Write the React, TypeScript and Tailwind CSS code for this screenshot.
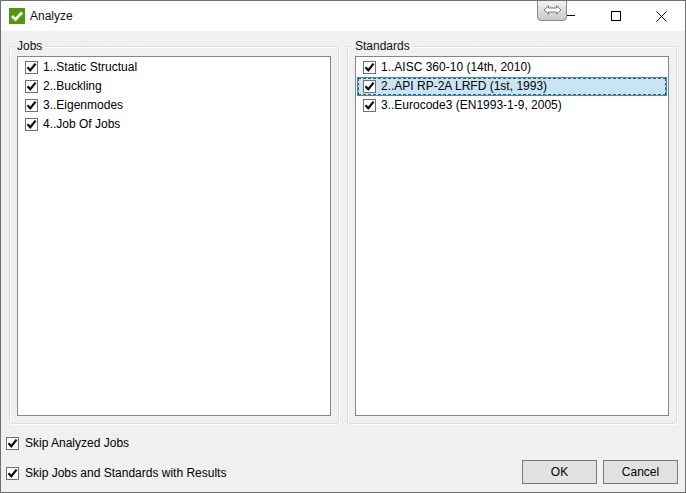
const JOBS = ["1..Static Structual", "2..Buckling", "3..Eigenmodes", "4..Job Of Jobs"];
const STANDARDS = ["1..AISC 360-10 (14th, 2010)", "2..API RP-2A LRFD (1st, 1993)", "3..Eurocode3 (EN1993-1-9, 2005)"];

function Check() {
  return (
    <span className="flex h-[13px] w-[13px] flex-shrink-0 items-center justify-center border border-[#707070] bg-white">
      <svg width="11" height="11" viewBox="0 0 11 11">
        <path d="M1.5 5.2 L4.3 8.3 L9.6 1.6" fill="none" stroke="#111" strokeWidth="2.3" />
      </svg>
    </span>
  );
}

function ListRow({ label, selected }: { label: string; selected?: boolean }) {
  if (selected) {
    return (
      <div className="flex h-[19px] items-center gap-[5px] border border-[#2f93cf] bg-[#c9e5f5] pl-[5px] outline-1 -outline-offset-2 outline-dashed outline-[#555]">
        <Check />
        <span className="mb-[2px] whitespace-nowrap">{label}</span>
      </div>
    );
  }
  return (
    <div className="flex h-[19px] items-center gap-[5px] pl-[6px]">
      <Check />
      <span className="mb-[2px] whitespace-nowrap">{label}</span>
    </div>
  );
}

function Group({ title, items, selected }: { title: string; items: string[]; selected?: number }) {
  return (
    <div className="relative h-[378px] w-[330px] rounded-[3px] border border-[#dcdcdc] px-[7px] pt-[9px] shadow-[inset_1px_1px_0_#fff,1px_1px_0_#fff]">
      <span className="absolute -top-[10px] left-[4px] bg-[#f0f0f0] px-[3px] leading-[18px] text-[#111]">{title}</span>
      <div className="h-[360px] w-[314px] border border-[#828790] bg-white px-[1px] pt-[1px]">
        {items.map((item, i) => (
          <ListRow key={item} label={item} selected={i === selected} />
        ))}
      </div>
    </div>
  );
}

function OptionRow({ label }: { label: string }) {
  return (
    <div className="flex items-center gap-[6px]">
      <Check />
      <span className="whitespace-nowrap">{label}</span>
    </div>
  );
}

export default function App() {
  return (
    <div className="relative flex h-[493px] w-[686px] flex-col overflow-hidden border border-[#6e6e6e] bg-[#f0f0f0] font-['Liberation_Sans',sans-serif] text-[12px] text-black">
      <div className="flex h-[30px] flex-shrink-0 items-center bg-white pl-[8px]">
        <span className="flex h-4 w-4 items-center justify-center bg-[#4f9a0a]">
          <svg width="14" height="14" viewBox="0 0 14 14">
            <path d="M2 7 L5.5 10.5 L12 3.5" fill="none" stroke="#fff" strokeWidth="2.8" />
          </svg>
        </span>
        <span className="ml-[5px] text-[#111]">Analyze</span>
        <div className="ml-auto flex items-center">
          <span className="mr-[36px] mt-[-2px] h-px w-[10px] bg-black" />
          <span className="mr-[35px] h-[10px] w-[10px] border border-black" />
          <svg className="mr-[18px]" width="11" height="11" viewBox="0 0 11 11">
            <path d="M0.5 0.5 L10.5 10.5 M10.5 0.5 L0.5 10.5" stroke="#111" strokeWidth="1" />
          </svg>
        </div>
      </div>

      <div className="absolute left-[536px] -top-[2px] flex h-[22px] w-[30px] items-center justify-center rounded-b-[4px] border border-[#8a8a8a] bg-linear-to-b from-[#f4f4f4] to-[#c8c8c8]">
        <svg width="19" height="10" viewBox="0 0 19 10">
          <path d="M1 5 L5.5 0.8 V3 H13.5 V0.8 L18 5 L13.5 9.2 V7 H5.5 V9.2 Z" fill="#fff" stroke="#777" strokeWidth="1" />
        </svg>
      </div>

      <div className="flex gap-[8px] pt-[15px] pl-[8px]">
        <Group title="Jobs" items={JOBS} />
        <Group title="Standards" items={STANDARDS} selected={1} />
      </div>

      <div className="flex flex-1 items-end justify-between pr-[7px] pb-[8px] pl-[5px]">
        <div className="flex flex-col gap-[12px] pb-[2px]">
          <OptionRow label="Skip Analyzed Jobs" />
          <OptionRow label="Skip Jobs and Standards with Results" />
        </div>
        <div className="flex gap-[6px]">
          <button className="h-[24px] w-[75px] border border-[#777] bg-[#e1e1e1]">OK</button>
          <button className="h-[24px] w-[75px] border border-[#777] bg-[#e1e1e1]">Cancel</button>
        </div>
      </div>
    </div>
  );
}
